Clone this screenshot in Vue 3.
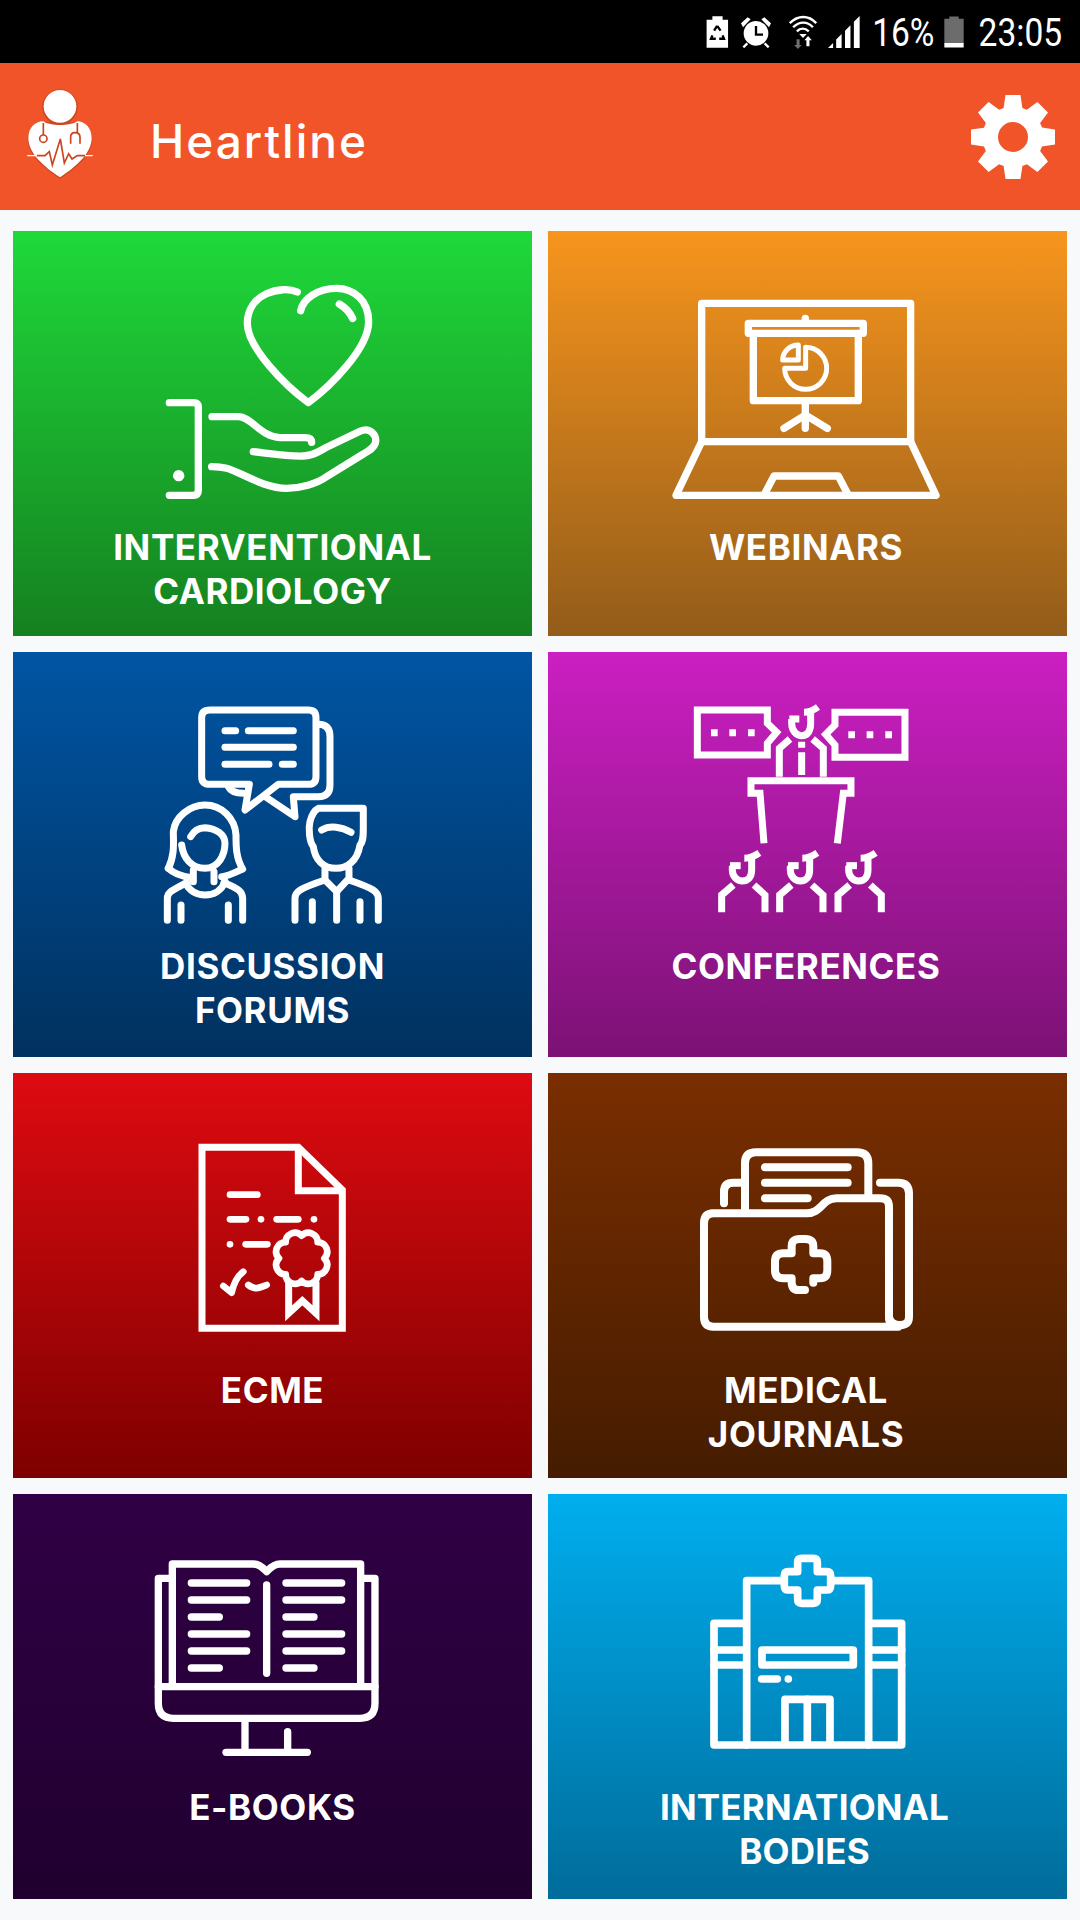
<template>
  <div class="page">
    <div class="status">
      <svg class="st-saver" width="23" height="32" viewBox="204 47 66 94">
        <path fill="#fff" d="M222 48H252V58H268V140H205V58H222Z" />
        <path fill="none" stroke="#000" stroke-width="7" d="M236 76 227 90M236 76 246 90M222 104 218 114H232M252 104 256 114H242" />
      </svg>
      <svg class="st-alarm" width="32" height="32" viewBox="303 46 96 96">
        <circle cx="351" cy="98" r="37" fill="#fff" />
        <path fill="#fff" d="M306 68 326 50 335 56 312 80ZM396 68 376 50 367 56 390 80Z" />
        <path fill="none" stroke="#fff" stroke-width="7" d="M325 128 313 140M377 128 389 140" />
        <path fill="none" stroke="#000" stroke-width="7" d="M351 76V102H372" />
      </svg>
      <svg class="st-wifi" width="30" height="34" viewBox="450 44 88 100">
        <path fill="none" stroke="#fff" stroke-width="7" d="M455 68C480 44 510 44 533 68M465 80C484 62 506 62 523 80M476 92C486 82 500 82 511 92" />
        <path fill="#fff" d="M483 100H505L494 112Z" />
        <path fill="#6f6f6f" d="M475 115H484V132H490L479 144 468 132H475Z" />
        <path fill="#fff" d="M504 136H513V118H520L509 106 498 118H504Z" />
      </svg>
      <svg class="st-signal" width="32" height="32" viewBox="568 47 94 94">
        <path fill="#fff" d="M568 141 583 126V141ZM592 141V116L608 100V141ZM618 141V90L634 74V141ZM644 141V64L661 47V141Z" />
      </svg>
      <span class="st-pct">16%</span>
      <svg class="st-batt" width="20" height="32" viewBox="916 47 60 95">
        <path fill="#6c6c6c" d="M932 48H960V55H975V127H917V55H932Z" />
        <path fill="#fff" d="M917 127H975V141H917Z" />
      </svg>
      <span class="st-time">23:05</span>
    </div>

    <header class="topbar">
      <svg class="logo" width="80" height="100" viewBox="60 250 240 300">
        <path fill="#b93c1c" d="M180 538C130 506 83 464 83 418 83 388 104 368 130 368H232C256 368 277 388 277 418 277 464 230 506 180 538Z" opacity=".55" />
        <path fill="#fff" d="M180 533C130 500 85 460 85 415 85 385 105 365 130 365 150 380 210 380 232 365 255 365 275 385 275 415 275 460 230 500 180 533Z" />
        <circle cx="180" cy="322" r="53" fill="#c9461f" />
        <circle cx="180" cy="320" r="49" fill="#fff" />
        <g fill="none" stroke="#c9461f" stroke-width="5">
          <path d="M130 370V406" />
          <circle cx="130" cy="417" r="11" />
          <path d="M232 370V398M212 432V412Q212 399 225 399 240 399 240 412V432" />
          <path d="M110 468H135L148 456 157 496 181 418 193 490 206 462 216 478 232 468H255" />
        </g>
        <path fill="none" stroke="#fff" stroke-width="4" d="M82 468H110M255 468H278" />
      </svg>
      <h1 class="brand">Heartline</h1>
      <svg class="gear" width="84" height="84" viewBox="-42 -42 84 84">
        <path fill="#fff" fill-rule="evenodd" :d="gearPath" />
      </svg>
    </header>

    <main class="grid">
      <section
        v-for="item in items"
        :key="item.key"
        class="card"
        :class="item.key"
      >
        <svg class="art" width="519" height="294" viewBox="0 0 519 294">
          <g :transform="item.tf" fill="none" stroke="#fff">
            <g
              v-for="(group, idx) in item.groups"
              :key="idx"
              :stroke-width="group.w"
              :stroke-linecap="group.sharp ? 'butt' : 'round'"
              :stroke-linejoin="group.sharp ? 'miter' : 'round'"
            >
              <path v-for="d in group.d" :key="d" :d="d" />
            </g>
          </g>
        </svg>
        <p class="label">
          <span v-for="line in item.lines" :key="line">{{ line }}</span>
        </p>
      </section>
    </main>
  </div>
</template>

<script setup>
// gear with 8 square teeth
function makeGear(outer, body, half, hole) {
  let d = "";
  for (let i = 0; i < 8; i++) {
    const a = (i * Math.PI) / 4;
    const c = Math.cos(a);
    const s = Math.sin(a);
    const pt = (r, t) => `${(r * c - t * s).toFixed(2)} ${(r * s + t * c).toFixed(2)}`;
    d += `${i ? "L" : "M"}${pt(body, -half * 1.25)}L${pt(outer, -half)}L${pt(outer, half)}L${pt(body, half * 1.25)}`;
  }
  d += `ZM${hole} 0A${hole} ${hole} 0 1 0 ${-hole} 0A${hole} ${hole} 0 1 0 ${hole} 0Z`;
  return d;
}

const gearPath = makeGear(42, 29, 7.5, 15);

// scalloped seal for the certificate
function makeSeal(cx, cy, r, lobes) {
  let d = "";
  for (let i = 0; i <= lobes; i++) {
    const a = (i * 2 * Math.PI) / lobes;
    const x = (cx + r * Math.cos(a)).toFixed(1);
    const y = (cy + r * Math.sin(a)).toFixed(1);
    d += i === 0 ? `M${x} ${y}` : `A28 28 0 0 1 ${x} ${y}`;
  }
  return d + "Z";
}

const listeners = [0, 174, 349].flatMap((x) => [
  `M${157 + x} 512V525C${157 + x} 545 ${172 + x} 558 ${187 + x} 558C${205 + x} 558 ${215 + x} 545 ${215 + x} 525V490`,
  `M${193 + x} 490Q${215 + x} 490 ${238 + x} 474`,
  `M${150 + x} 512H${182 + x}`,
  `M${160 + x} 570L${125 + x} 600V652`,
  `M${222 + x} 570L${255 + x} 600V652`,
]);

const lines = (x1, x2, x3, ys, short) =>
  ys.map((y, i) => `M${x1} ${y}H${short.includes(i) ? x3 : x2}`);

const items = [
  {
    key: "green",
    lines: ["INTERVENTIONAL", "CARDIOLOGY"],
    tf: "translate(127 39) scale(.3333)",
    groups: [
      {
        w: 22,
        d: [
          "M472 66C425 45 322 70 322 160 322 235 440 350 505 398 570 350 686 235 686 155 686 90 640 55 590 55 535 55 490 85 482 122",
          "M598 102C615 112 630 128 638 145",
          "M88 398H160Q175 398 175 412V660Q175 676 160 676H88",
          "M116 611a6 6 0 1 0 .01 0",
          "M216 440H295C335 440 360 500 420 503H495Q515 503 515 517",
          "M340 545C400 552 450 560 490 558 520 557 535 545 560 532L660 484C690 470 712 495 706 520 700 535 690 540 670 552L560 620C530 642 480 655 440 655 370 655 300 605 260 595 240 590 225 590 215 590",
        ],
      },
    ],
  },
  {
    key: "orange",
    lines: ["WEBINARS"],
    tf: "translate(112 59) scale(.3333)",
    groups: [
      {
        w: 22,
        d: [
          "M125 455V40H752V455",
          "M125 455H752L828 616H48Z",
          "M315 610L342 558H535L562 610",
          "M265 100H610V130H265Z",
          "M436 85V100",
          "M280 130V332H595V130",
          "M436 332V415",
          "M372 415L436 375 502 415",
        ],
      },
      {
        w: 15,
        d: [
          "M437 172A63 63 0 1 1 374 235H437Z",
          "M415 165V210H368C368 185 390 165 415 165Z",
        ],
      },
    ],
  },
  {
    key: "blue",
    lines: ["DISCUSSION", "FORUMS"],
    tf: "translate(137 43) scale(.3333)",
    groups: [
      {
        w: 21,
        d: [
          "M180 45H475Q498 45 498 68V245Q498 268 475 268H385L285 345 298 268H180Q155 268 155 245V68Q155 45 180 45Z",
          "M505 88Q540 88 540 125V270Q540 305 505 305H430L435 365 350 308",
          "M235 275Q245 295 280 295",
          "M225 107H257",
          "M295 107H430",
          "M225 157H430",
          "M225 208H357",
          "M397 208H430",
          "M55 520C75 480 70 440 70 410 75 365 120 330 165 330 215 330 255 370 258 420 258 455 258 490 278 522 250 535 230 545 215 545",
          "M55 520C75 540 100 545 125 548",
          "M95 450C100 490 125 520 165 520 205 520 225 480 225 445 225 420 200 400 165 398 145 398 130 410 122 425",
          "M130 525V560",
          "M192 530V560",
          "M108 565C125 610 205 615 225 560",
          "M52 676V610C52 590 70 585 110 563",
          "M278 676V610C278 590 265 580 222 563",
          "M93 630V676",
          "M235 630V676",
          "M505 340H640V400C640 420 640 440 630 450 622 500 590 520 558 520 520 520 495 495 490 455 478 440 475 400 480 380 485 360 495 345 505 340Z",
          "M515 405C540 390 575 395 603 412",
          "M525 520V555L560 590 597 550V520",
          "M435 676V610C435 590 450 580 525 555",
          "M685 676V610C685 590 670 580 597 555",
          "M560 590V676",
          "M487 620V676",
          "M630 620V676",
        ],
      },
    ],
  },
  {
    key: "purple",
    lines: ["CONFERENCES"],
    tf: "translate(132 43) scale(.3333)",
    groups: [
      {
        w: 21,
        sharp: true,
        d: [
          "M52 45H262V85L290 112 262 145V180H52Z",
          "M675 52H465V90L437 118 465 150V187H675Z",
          "M93 113h20M148 113h20M204 113h20",
          "M505 119h20M560 119h20M616 119h20",
          "M335 72V85C335 108 350 122 365 122 383 122 392 108 392 85V52",
          "M372 52Q392 52 414 36",
          "M328 72H358",
          "M330 132L298 160V245",
          "M398 132L430 160V245",
          "M365 140V158M365 172V240",
          "M252 445L240 295H213V257H513V295H490L472 445",
          ...listeners,
        ],
      },
    ],
  },
  {
    key: "red",
    lines: ["ECME"],
    tf: "translate(167 57) scale(.3333)",
    groups: [
      {
        w: 21,
        sharp: true,
        d: [
          "M355 52H66V595H487V180Z",
          "M355 52V182H487",
          "M326 455V550L367 512 408 550V455",
        ],
      },
      {
        w: 20,
        d: [
          "M150 194H232",
          "M150 268H198",
          "M243 268h.01",
          "M290 268H355",
          "M402 268h.01",
          "M150 343h.01",
          "M197 343H262",
          "M130 468L155 488C160 465 170 440 190 425",
          "M205 465C225 480 235 475 260 465",
          makeSeal(365, 385, 68, 8),
        ],
      },
    ],
  },
  {
    key: "brown",
    lines: ["MEDICAL", "JOURNALS"],
    tf: "translate(142 62) scale(.3333)",
    groups: [
      {
        w: 24,
        d: [
          "M165 225V85Q165 52 198 52H500Q535 52 535 85V185",
          "M225 97H473",
          "M225 143H473",
          "M225 190H353",
          "M102 205V170Q102 143 130 143H165",
          "M570 143H625Q657 143 657 175V545Q657 570 630 570 600 570 597 545",
          "M65 235H350C395 235 395 190 440 190H570Q597 190 597 215V545Q597 575 625 575H70Q42 575 42 545V265Q42 235 70 235Z",
          "M345 465H325Q305 465 305 440V430H280Q255 430 255 405V380Q255 355 280 355H305V335Q305 312 330 312H345Q370 312 370 335V355H390Q412 355 412 380V405Q412 430 390 430H370V443",
        ],
      },
    ],
  },
  {
    key: "violet",
    lines: ["E-BOOKS"],
    tf: "translate(127 56) scale(.3333)",
    groups: [
      {
        w: 22,
        d: [
          "M97 405V42H340C360 42 370 55 380 65 390 55 400 42 420 42H662V405",
          "M97 85H55V460Q55 505 100 505H660Q705 505 705 460V85H662",
          "M55 410H705",
          "M380 105V370",
          ...lines(154, 320, 238, [99, 150, 201, 252, 303, 354], [2, 5]),
          ...lines(438, 605, 522, [99, 150, 201, 252, 303, 354], [2, 5]),
          "M315 510V605",
          "M443 545V605",
          "M258 607H502",
        ],
      },
    ],
  },
  {
    key: "cyan",
    lines: ["INTERNATIONAL", "BODIES"],
    tf: "translate(142 46) scale(.3333)",
    groups: [
      {
        w: 23,
        d: [
          "M275 122H170V615",
          "M430 122H536V615",
          "M160 250H72V615H635V250H546",
          "M72 330H160M72 375H160M546 330H635M546 375H635",
          "M335 55H370Q382 55 382 67V95H410Q422 95 422 107V137Q422 150 410 150H382V178Q382 190 370 190H335Q323 190 323 178V150H295Q283 150 283 137V107Q283 95 295 95H323V67Q323 55 335 55Z",
          "M216 330H490V375H216Z",
          "M215 417H262",
          "M295 417h.01",
          "M285 610V478H420V610",
          "M352 478V610",
        ],
      },
    ],
  },
];
</script>

<style>
html,
body {
  margin: 0;
  padding: 0;
  background: #f8f9fb;
}
</style>

<style scoped>
.page {
  width: 1080px;
  height: 1920px;
  background: #f8f9fb;
  overflow: hidden;
}

/* Status bar */
.status {
  height: 63px;
  background: #000;
  display: flex;
  align-items: center;
  justify-content: flex-end;
  padding-right: 18px;
  box-sizing: border-box;
  color: #fff;
  font-family: Roboto, sans-serif;
  font-size: 39px;
}
.status svg {
  display: block;
  flex-shrink: 0;
}
.status span {
  transform-origin: right center;
  transform: scaleX(0.86);
  margin-top: 3px;
}
.st-saver {
  margin-right: 11px;
}
.st-alarm {
  margin-right: 16px;
}
.st-wifi {
  margin-right: 10px;
}
.st-signal {
  margin-right: 11px;
}
.st-pct {
  margin-left: -9px;
  margin-right: 9px;
}
.st-batt {
  margin-right: 13px;
}
.st-time {
  margin-left: -12px;
}

/* Header */
.topbar {
  height: 147px;
  background: #f15429;
  display: flex;
  align-items: center;
  padding: 0 25px 0 20px;
}
.logo {
  display: block;
  margin-right: 50px;
  margin-bottom: 7px;
}
.brand {
  flex: 1;
  margin: 9px 0 0;
  color: #fff;
  font-family: Inter, sans-serif;
  font-size: 46px;
  font-weight: 500;
  letter-spacing: 2px;
}
.gear {
  display: block;
}

/* Menu cards */
.grid {
  display: grid;
  grid-template-columns: 519px 519px;
  grid-auto-rows: 405px;
  gap: 16px;
  padding: 21px 13px;
}
.card {
  display: flex;
  flex-direction: column;
  align-items: center;
  box-sizing: border-box;
}
.art {
  display: block;
  flex-shrink: 0;
}
.label {
  margin: 0;
  color: #fff;
  font-family: Inter, sans-serif;
  font-size: 35px;
  font-weight: 700;
  letter-spacing: 0.6px;
  line-height: 44px;
  text-align: center;
}
.label span {
  display: block;
}

/* small label offsets per row/column */
.blue .label,
.purple .label {
  margin-top: -2px;
}
.red .label,
.brown .label {
  margin-top: 1px;
}
.violet .label,
.cyan .label {
  margin-top: -3px;
}
.orange .label,
.purple .label,
.brown .label {
  margin-right: 3px;
}
.cyan .label {
  margin-right: 6px;
  letter-spacing: 0.2px;
}

.green {
  background: linear-gradient(#1fd93a, #158020);
}
.orange {
  background: linear-gradient(#f7951d, #935c1a);
}
.blue {
  background: linear-gradient(#0055a4, #01315f);
}
.purple {
  background: linear-gradient(#cb1fc2, #7c1275);
}
.red {
  background: linear-gradient(#de0b11, #7e0000);
}
.brown {
  background: linear-gradient(#7a2e00, #451c00);
}
.violet {
  background: linear-gradient(#300045, #20002f);
}
.cyan {
  background: linear-gradient(#00aeee, #006c9b);
}
</style>
